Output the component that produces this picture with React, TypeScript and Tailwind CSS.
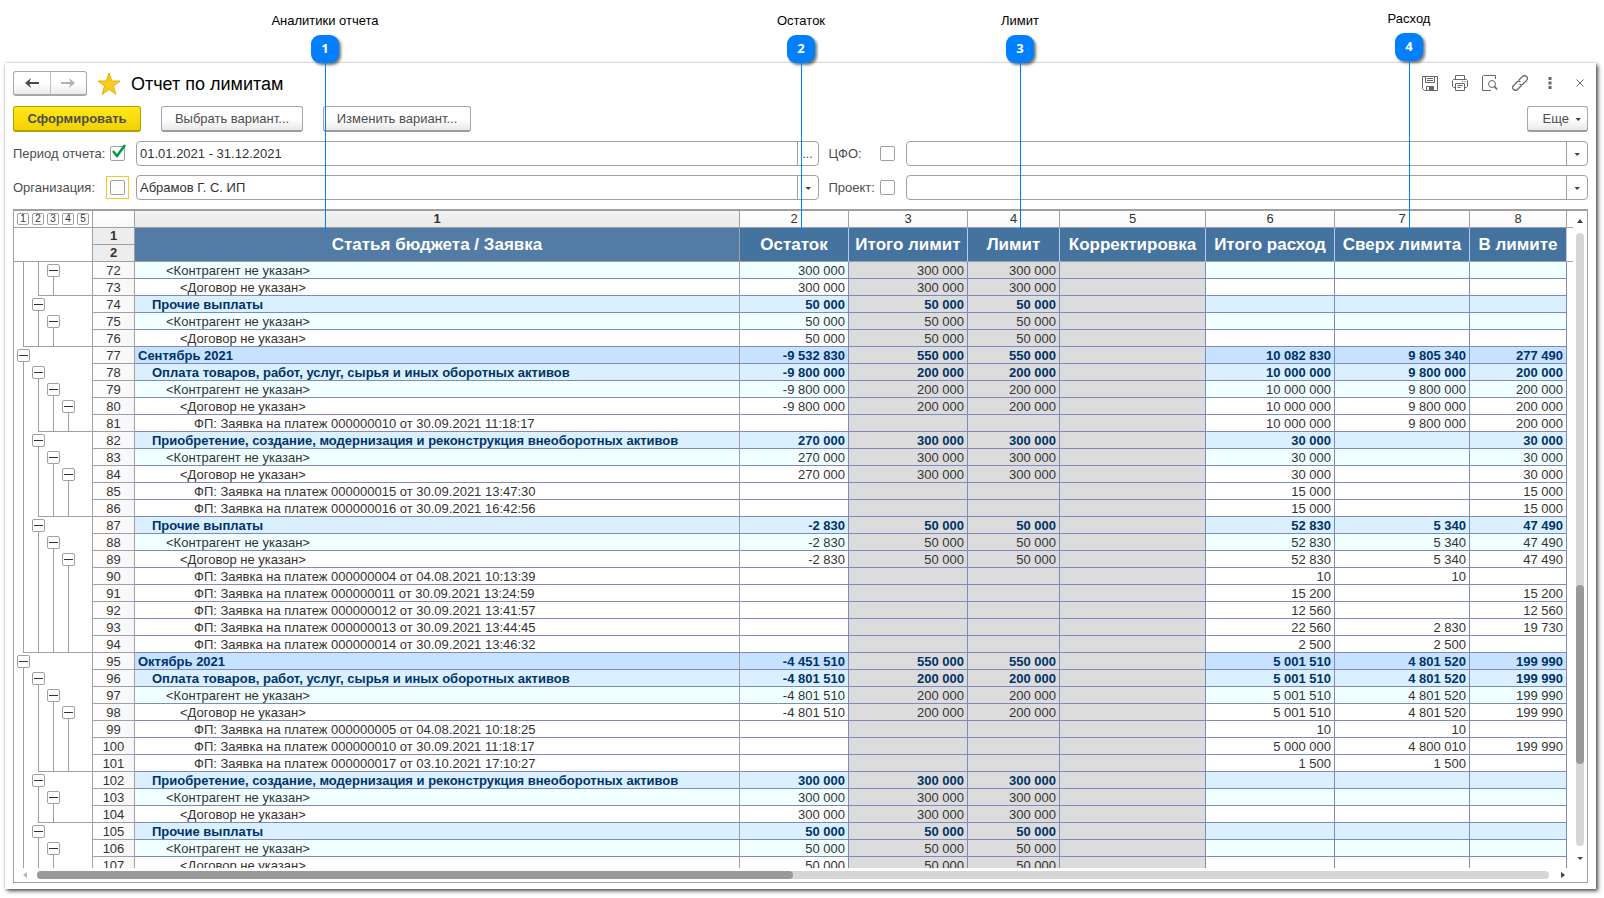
import { Fragment } from 'react'
import clsx from 'clsx'

// [row number, level, title, ostatok, itogo limit, limit, itogo rashod, sverh limita, v limite]
type Row = [number, number, string, string, string, string, string, string, string]

const CONTRAGENT = '<Контрагент не указан>'
const DOGOVOR = '<Договор не указан>'
const PAYMENT = 'Оплата товаров, работ, услуг, сырья и иных оборотных активов'
const PURCHASE = 'Приобретение, создание, модернизация и реконструкция внеоборотных активов'
const OTHER = 'Прочие выплаты'

const rows: Row[] = [
  [72, 2, CONTRAGENT, '300 000', '300 000', '300 000', '', '', ''],
  [73, 3, DOGOVOR, '300 000', '300 000', '300 000', '', '', ''],
  [74, 1, OTHER, '50 000', '50 000', '50 000', '', '', ''],
  [75, 2, CONTRAGENT, '50 000', '50 000', '50 000', '', '', ''],
  [76, 3, DOGOVOR, '50 000', '50 000', '50 000', '', '', ''],
  [77, 0, 'Сентябрь 2021', '-9 532 830', '550 000', '550 000', '10 082 830', '9 805 340', '277 490'],
  [78, 1, PAYMENT, '-9 800 000', '200 000', '200 000', '10 000 000', '9 800 000', '200 000'],
  [79, 2, CONTRAGENT, '-9 800 000', '200 000', '200 000', '10 000 000', '9 800 000', '200 000'],
  [80, 3, DOGOVOR, '-9 800 000', '200 000', '200 000', '10 000 000', '9 800 000', '200 000'],
  [81, 4, 'ФП: Заявка на платеж 000000010 от 30.09.2021 11:18:17', '', '', '', '10 000 000', '9 800 000', '200 000'],
  [82, 1, PURCHASE, '270 000', '300 000', '300 000', '30 000', '', '30 000'],
  [83, 2, CONTRAGENT, '270 000', '300 000', '300 000', '30 000', '', '30 000'],
  [84, 3, DOGOVOR, '270 000', '300 000', '300 000', '30 000', '', '30 000'],
  [85, 4, 'ФП: Заявка на платеж 000000015 от 30.09.2021 13:47:30', '', '', '', '15 000', '', '15 000'],
  [86, 4, 'ФП: Заявка на платеж 000000016 от 30.09.2021 16:42:56', '', '', '', '15 000', '', '15 000'],
  [87, 1, OTHER, '-2 830', '50 000', '50 000', '52 830', '5 340', '47 490'],
  [88, 2, CONTRAGENT, '-2 830', '50 000', '50 000', '52 830', '5 340', '47 490'],
  [89, 3, DOGOVOR, '-2 830', '50 000', '50 000', '52 830', '5 340', '47 490'],
  [90, 4, 'ФП: Заявка на платеж 000000004 от 04.08.2021 10:13:39', '', '', '', '10', '10', ''],
  [91, 4, 'ФП: Заявка на платеж 000000011 от 30.09.2021 13:24:59', '', '', '', '15 200', '', '15 200'],
  [92, 4, 'ФП: Заявка на платеж 000000012 от 30.09.2021 13:41:57', '', '', '', '12 560', '', '12 560'],
  [93, 4, 'ФП: Заявка на платеж 000000013 от 30.09.2021 13:44:45', '', '', '', '22 560', '2 830', '19 730'],
  [94, 4, 'ФП: Заявка на платеж 000000014 от 30.09.2021 13:46:32', '', '', '', '2 500', '2 500', ''],
  [95, 0, 'Октябрь 2021', '-4 451 510', '550 000', '550 000', '5 001 510', '4 801 520', '199 990'],
  [96, 1, PAYMENT, '-4 801 510', '200 000', '200 000', '5 001 510', '4 801 520', '199 990'],
  [97, 2, CONTRAGENT, '-4 801 510', '200 000', '200 000', '5 001 510', '4 801 520', '199 990'],
  [98, 3, DOGOVOR, '-4 801 510', '200 000', '200 000', '5 001 510', '4 801 520', '199 990'],
  [99, 4, 'ФП: Заявка на платеж 000000005 от 04.08.2021 10:18:25', '', '', '', '10', '10', ''],
  [100, 4, 'ФП: Заявка на платеж 000000010 от 30.09.2021 11:18:17', '', '', '', '5 000 000', '4 800 010', '199 990'],
  [101, 4, 'ФП: Заявка на платеж 000000017 от 03.10.2021 17:10:27', '', '', '', '1 500', '1 500', ''],
  [102, 1, PURCHASE, '300 000', '300 000', '300 000', '', '', ''],
  [103, 2, CONTRAGENT, '300 000', '300 000', '300 000', '', '', ''],
  [104, 3, DOGOVOR, '300 000', '300 000', '300 000', '', '', ''],
  [105, 1, OTHER, '50 000', '50 000', '50 000', '', '', ''],
  [106, 2, CONTRAGENT, '50 000', '50 000', '50 000', '', '', ''],
  [107, 3, DOGOVOR, '50 000', '50 000', '50 000', '', '', ''],
]

const headers = ['Остаток', 'Итого лимит', 'Лимит', 'Корректировка', 'Итого расход', 'Сверх лимита', 'В лимите']

const rowBg = ['bg-[#c6e2ff]', 'bg-[#dbf0ff]', 'bg-[#f0ffff]', 'bg-white', 'bg-white']
const indent = ['pl-[3px]', 'pl-[17px]', 'pl-[31px]', 'pl-[45px]', 'pl-[59px]']

const markers = [
  { n: 1, label: 'Аналитики отчета', pos: 'left-[325px] top-[13px]', line: 'h-[170px]' },
  { n: 2, label: 'Остаток', pos: 'left-[801px] top-[13px]', line: 'h-[168px]' },
  { n: 3, label: 'Лимит', pos: 'left-[1020px] top-[13px]', line: 'h-[168px]' },
  { n: 4, label: 'Расход', pos: 'left-[1409px] top-[11px]', line: 'h-[172px]' },
]

function Marker({ n, label, pos, line }: (typeof markers)[number]) {
  return (
    <div className={clsx('pointer-events-none absolute z-20 flex w-0 flex-col items-center', pos)}>
      <span className="text-[13px] leading-4 whitespace-nowrap text-black">{label}</span>
      <span className="mt-[6px] flex size-7 shrink-0 items-center justify-center rounded-[9px] bg-[#0080ff] font-['Open_Sans',sans-serif] text-[13px] font-bold text-white shadow-[2px_2px_3px_rgba(0,0,0,0.55)]">
        {n}
      </span>
      <span className={clsx('w-px bg-[#0080ff]', line)} />
    </div>
  )
}

function Caret({ dir = 'down', className = 'text-[#404040]' }: { dir?: 'up' | 'down' | 'left' | 'right'; className?: string }) {
  const d = {
    down: 'M1.500 3h5.500L4.200 6z',
    up: 'M1 6h6L4 2z',
    left: 'M6 1v6L2 4z',
    right: 'M2 1v6l4-3z',
  }[dir]
  return (
    <svg className={clsx('size-2 shrink-0', className)} viewBox="0 0 8 8" fill="currentColor">
      <path d={d} />
    </svg>
  )
}

const buttonClass =
  'h-[26px] rounded-[3px] border border-[#a8a8a8] border-b-2 border-b-[#9c9c9c] bg-linear-to-b from-white from-50% to-[#e9e9e9] text-[13px] text-[#4d4d4d]'

function Toolbar() {
  return (
    <div className="flex items-center">
      <div className="flex h-[25px] w-[74px] rounded-[3px] border border-b-2 border-[#a8a8a8] bg-linear-to-b from-white from-50% to-[#ececec]">
        <button aria-label="Назад" className="flex flex-1 items-center justify-center border-r border-[#c0c0c0] text-[#4a4a4a]">
          <svg className="h-3 w-4" viewBox="0 0 16 12" fill="currentColor">
            <path d="M1 6l6-5-1.500 4H15v2H5.500L7 11z" />
          </svg>
        </button>
        <button aria-label="Вперед" className="flex flex-1 items-center justify-center text-[#b0b0b0]">
          <svg className="h-3 w-4" viewBox="0 0 16 12" fill="currentColor">
            <path d="M15 6L9 1l1.500 4H1v2h9.500L9 11z" />
          </svg>
        </button>
      </div>
      <svg className="ml-[10px] size-6" viewBox="0 0 24 24">
        <path
          d="M12 1l2.800 8H23l-6.600 5 2.500 8.300L12 17.300l-6.900 5L7.600 14 1 9h8.200z"
          fill="#fccb1f"
          stroke="#e3b006"
          strokeWidth="1"
        />
      </svg>
      <h1 className="ml-[10px] text-[18px] leading-6 text-black">Отчет по лимитам</h1>

      <div className="ml-auto flex h-6 items-start gap-[14px] pt-[3px] text-[#666]">
        <button aria-label="Сохранить">
          <svg className="size-4" viewBox="0 0 16 16" fill="none" stroke="currentColor">
            <path d="M.5 1.500h15v14h-13l-2-2zM3.500 1.500v6h9v-6M5 3.500h6M5 5.500h6M4.500 15.500v-4h7v4" />
            <path d="M7 12h4v3H7z" fill="currentColor" stroke="none" />
          </svg>
        </button>
        <button aria-label="Печать">
          <svg className="size-4" viewBox="0 0 16 16" fill="none" stroke="currentColor">
            <path d="M3.500 4.500v-4h9v4M3.500 12.500h-2l-1-1v-6l1-1h13l1 1v6l-1 1h-2M3.500 8.500h9v7h-9zM5.500 10.500h5M5.500 12.500h3M10 6.500h1M12.500 6.500h1" />
          </svg>
        </button>
        <button aria-label="Просмотр">
          <svg className="size-4" viewBox="0 0 16 16" fill="none" stroke="currentColor">
            <path d="M13.500 4V.5H1.500l-1 1v14H9" />
            <circle cx="10" cy="9" r="3.500" />
            <path d="M12.500 11.500l2.500 3" strokeWidth="1.800" />
          </svg>
        </button>
        <button aria-label="Ссылка">
          <svg className="size-4" viewBox="0 0 16 16" fill="none" stroke="currentColor" strokeWidth="1.200">
            <path d="M6.500 5.500l4-4a2.700 2.700 0 0 1 4 4l-3.500 3.500a2.500 2.500 0 0 1-3.500 0" />
            <path d="M9.500 10.500l-4 4a2.700 2.700 0 0 1-4-4L5 7a2.500 2.500 0 0 1 3.500 0" />
          </svg>
        </button>
        <button aria-label="Еще действия">
          <svg className="size-4" viewBox="0 0 16 16" fill="currentColor">
            <path d="M6.500 2h3v3h-3zM6.500 6.500h3v3h-3zM6.500 11h3v3h-3z" />
          </svg>
        </button>
        <button aria-label="Закрыть">
          <svg className="size-4" viewBox="0 0 16 16" stroke="currentColor">
            <path d="M4.500 4.500l7 7M11.500 4.500l-7 7" />
          </svg>
        </button>
      </div>
    </div>
  )
}

interface FieldProps {
  id: string
  label: string
  value?: string
  checked?: boolean
  focused?: boolean
  picker?: boolean
  second?: boolean
}

function Field({ id, label, value = '', checked, focused, picker, second }: FieldProps) {
  return (
    <>
      <label htmlFor={id} className={clsx('text-[13px] whitespace-nowrap text-[#4d4d4d]', second && 'pl-[10px]')}>
        {label}
      </label>
      <div className={clsx('relative size-[15px]', focused && 'outline outline-offset-3 outline-[#f7c926]')}>
        <input
          type="checkbox"
          aria-label={label}
          defaultChecked={checked}
          className="block size-[15px] appearance-none rounded-[2px] border border-[#a0a0a0] bg-white"
        />
        {checked && (
          <svg className="pointer-events-none absolute -top-1 left-0 h-[18px] w-[18px]" viewBox="0 0 18 18" fill="none" stroke="#009646" strokeWidth="2.500">
            <path d="M3 9l4 5 8-11" />
          </svg>
        )}
      </div>
      <div className="flex h-[25px] overflow-hidden rounded-[4px] border border-[#a0a0a0] bg-white">
        <input id={id} type="text" defaultValue={value} className="min-w-0 flex-1 px-[3px] text-[13px] text-[#333] outline-none" />
        <button aria-label={'Выбрать: ' + label} className="flex w-[21px] items-center justify-center border-l border-[#a0a0a0] text-xs text-[#404040]">
          {picker ? '...' : <Caret />}
        </button>
      </div>
    </>
  )
}

function TreeCell({ level, next }: { level: number; next: number }) {
  const hasChildren = next > level
  // groups from this level down end under the current row
  const closing = next < level ? next : 9
  return (
    <div className="flex h-[17px] pl-px">
      {[0, 1, 2, 3, 4].map((k) => {
        if (k === level && hasChildren) {
          return (
            <div key={k} className="flex w-[15px] flex-col items-center pt-[2px] pl-[2px]">
              <button
                aria-label="Свернуть"
                className="flex size-[13px] shrink-0 items-center justify-center rounded-[2px] border border-[#a0a0a0] bg-white"
              >
                <span className="h-px w-[9px] bg-[#333]" />
              </button>
              <span className="w-px flex-1 bg-[#a0a0a0]" />
            </div>
          )
        }
        return (
          <Fragment key={k}>
            <span className={clsx('w-2 border-[#a0a0a0]', k > closing && 'border-b')} />
            <span className={clsx('w-[7px] border-[#a0a0a0]', k < level && 'border-l', k >= closing && 'border-b')} />
          </Fragment>
        )
      })}
      <span className={clsx('flex-1 border-[#a0a0a0]', closing < 9 && 'border-b')} />
    </div>
  )
}

function ReportTable() {
  const plainHead = 'border-r border-b border-[#a0a0a0] bg-linear-to-b from-white to-[#f7f7f7] text-[13px] font-normal text-[#333]'
  return (
    <table className="w-full table-fixed border-separate border-spacing-0 leading-4">
      <colgroup>
        <col className="w-[79px]" />
        <col className="w-[42px]" />
        <col />
        <col className="w-[109px]" />
        <col className="w-[119px]" />
        <col className="w-[92px]" />
        <col className="w-[146px]" />
        <col className="w-[129px]" />
        <col className="w-[135px]" />
        <col className="w-[97px]" />
        <col className="w-[6px]" />
      </colgroup>
      <thead>
        <tr className="h-[17px]">
          <th className="border-r border-b border-[#a0a0a0] p-0">
            <div className="flex gap-[3px] pl-[3px]">
              {[1, 2, 3, 4, 5].map((n) => (
                <button
                  key={n}
                  className="flex size-3 items-center justify-center rounded-[2px] border border-[#a0a0a0] text-[10px] leading-none font-normal text-[#333]"
                >
                  {n}
                </button>
              ))}
            </div>
          </th>
          <th className={clsx(plainHead, 'p-0')} />
          <th className="border-r border-b border-[#a0a0a0] bg-linear-to-b from-[#f2f2f2] to-[#e9e9e9] p-0 text-[13px] font-bold text-[#333]">1</th>
          {[2, 3, 4, 5, 6, 7, 8].map((n) => (
            <th key={n} className={clsx(plainHead, 'p-0')}>
              {n}
            </th>
          ))}
          <th className="border-b border-[#a0a0a0] p-0" />
        </tr>
        <tr className="h-[17px]">
          <th rowSpan={2} className="border-r border-b border-[#a0a0a0] p-0" />
          <th className="border-r border-b border-[#a0a0a0] bg-[#ededed] p-0 text-[13px] font-bold text-[#333]">1</th>
          <th rowSpan={2} className="border-r border-b border-[#a0a0a0] bg-[#527ca5] p-0 text-[17px] font-bold text-white">
            Статья бюджета / Заявка
          </th>
          {headers.map((h) => (
            <th
              key={h}
              rowSpan={2}
              className="border-r border-b border-r-[#b9c9ee] border-b-[#a0a0a0] bg-[#4573a0] p-0 text-[17px] font-bold whitespace-nowrap text-white"
            >
              {h}
            </th>
          ))}
          <th rowSpan={2} className="border-b border-[#a0a0a0] p-0" />
        </tr>
        <tr className="h-[17px]">
          <th className="border-r border-b border-[#a0a0a0] bg-[#ededed] p-0 text-[13px] font-bold text-[#333]">2</th>
        </tr>
      </thead>
      <tbody>
        {rows.map(([num, level, title, ost, itogo, limit, rashod, over, within], i) => {
          const strong = level < 2
          const text = strong ? 'font-bold text-[#003366]' : 'text-[#333]'
          const next = i + 1 < rows.length ? rows[i + 1][1] : level
          return (
            <tr key={num} className="h-[17px] leading-[15px]">
              <td className="border-r border-[#a0a0a0] p-0">
                <TreeCell level={level} next={next} />
              </td>
              <td className="border-r border-b border-[#a0a0a0] bg-linear-to-r from-white to-[#f7f7f7] px-0 pt-px pb-0 text-center text-[13px] text-[#333]">{num}</td>
              <td
                className={clsx(
                  'overflow-hidden border-r border-b border-r-[#a0a0a0] border-b-[#7f89bd] pt-px pb-0 text-[13px] whitespace-nowrap',
                  indent[level],
                  rowBg[level],
                  text,
                )}
              >
                {title}
              </td>
              {[ost, itogo, limit, '', rashod, over, within].map((v, c) => (
                <td
                  key={c}
                  className={clsx(
                    'border-r border-b border-[#7f89bd] pt-px pr-[3px] pb-0 text-right text-[13px] whitespace-nowrap',
                    c > 0 && c < 4 ? 'bg-[#dcdcdc]' : rowBg[level],
                    text,
                  )}
                >
                  {v}
                </td>
              ))}
              <td className="p-0" />
            </tr>
          )
        })}
      </tbody>
    </table>
  )
}

export default function App() {
  return (
    <div className="relative flex h-screen flex-col overflow-hidden bg-white pt-[63px] pr-2 pb-[9px] pl-[5px] font-['Liberation_Sans',Arial,sans-serif]">
      {markers.map((m) => (
        <Marker key={m.n} {...m} />
      ))}

      <main className="flex min-h-0 flex-1 flex-col bg-white px-2 pt-2 pb-[6px] shadow-[2px_2px_4px_rgba(0,0,0,0.7),0_0_2px_rgba(0,0,0,0.2)]">
        <Toolbar />

        <div className="mt-[10px] flex gap-5">
          <button className="h-[26px] w-32 rounded-[3px] border border-b-2 border-[#b3a000] bg-linear-to-b from-[#ffe81a] to-[#f2d200] text-[13px] font-bold text-[#4d4d4d]">
            Сформировать
          </button>
          <button className={clsx(buttonClass, 'w-[142px]')}>Выбрать вариант...</button>
          <button className={clsx(buttonClass, 'w-[148px]')}>Изменить вариант...</button>
          <button className={clsx(buttonClass, 'ml-auto flex w-[61px] items-center justify-end gap-[5px] pr-[5px]')}>
            Еще
            <Caret />
          </button>
        </div>

        <div className="mt-[9px] grid grid-cols-[97px_26px_1fr_61px_26px_1fr] items-center gap-y-[9px]">
          <Field id="period" label="Период отчета:" value="01.01.2021 - 31.12.2021" checked picker />
          <Field id="cfo" label="ЦФО:" second />
          <Field id="org" label="Организация:" value="Абрамов Г. С. ИП" focused />
          <Field id="project" label="Проект:" second />
        </div>

        <div className="mt-[9px] flex min-h-0 flex-1 flex-col border border-t-2 border-[#a0a0a0]">
          <div className="flex min-h-0 flex-1">
            <div className="min-w-0 flex-1 overflow-hidden">
              <ReportTable />
            </div>
            <div className="flex w-[14px] flex-col items-center pt-1.5 pb-1.5">
              <Caret dir="up" />
              <div className="mt-2 flex w-2 flex-1 flex-col rounded-full bg-[#d6d6d6]">
                <div className="grow-[351]" />
                <div className="grow-[179] rounded-full bg-[#999]" />
                <div className="grow-[82]" />
              </div>
              <Caret dir="down" className="mt-2 text-[#404040]" />
            </div>
          </div>
          <div className="flex h-[14px] items-center pr-5 pl-[7px]">
            <Caret dir="left" className="text-[#b5b5b5]" />
            <div className="mr-[10px] ml-2 flex h-2 flex-1 rounded-full bg-[#d6d6d6]">
              <div className="w-1/2 rounded-full bg-[#999]" />
            </div>
            <Caret dir="right" />
          </div>
        </div>
      </main>
    </div>
  )
}
